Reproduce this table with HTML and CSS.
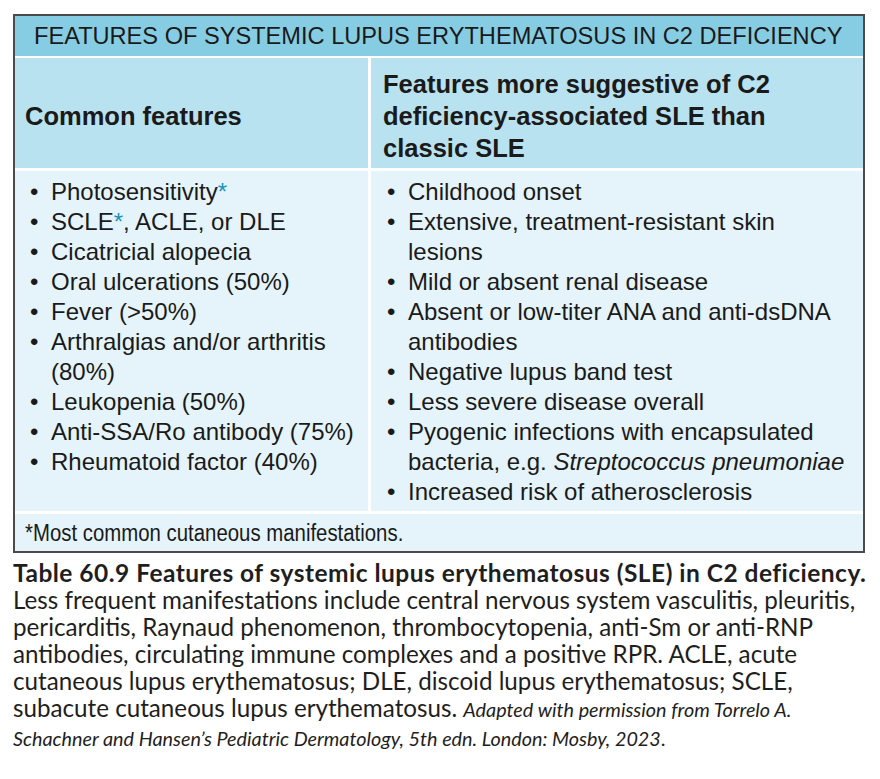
FILE: index.html
```html
<!DOCTYPE html>
<html lang="en">
<head>
<meta charset="utf-8">
<title>Table 60.9</title>
<link rel="stylesheet" href="styles.css">
</head>
<body>
<div class="page">
  <div class="tbl">
    <div class="title">FEATURES OF SYSTEMIC LUPUS ERYTHEMATOSUS IN C2 DEFICIENCY</div>
    <div class="grid">
      <div class="head head1">Common features</div>
      <div class="head head2">Features more suggestive of C2<br>deficiency-associated SLE than<br>classic SLE</div>
      <ul class="list list1">
        <li><span class="dot">•</span><span>Photosensitivity<span class="ast">*</span></span></li>
        <li><span class="dot">•</span><span>SCLE<span class="ast">*</span>, ACLE, or DLE</span></li>
        <li><span class="dot">•</span><span>Cicatricial alopecia</span></li>
        <li><span class="dot">•</span><span>Oral ulcerations (50%)</span></li>
        <li><span class="dot">•</span><span>Fever (&gt;50%)</span></li>
        <li><span class="dot">•</span><span>Arthralgias and/or arthritis<br>(80%)</span></li>
        <li><span class="dot">•</span><span>Leukopenia (50%)</span></li>
        <li><span class="dot">•</span><span>Anti-SSA/Ro antibody (75%)</span></li>
        <li><span class="dot">•</span><span>Rheumatoid factor (40%)</span></li>
      </ul>
      <ul class="list list2">
        <li><span class="dot">•</span><span>Childhood onset</span></li>
        <li><span class="dot">•</span><span>Extensive, treatment-resistant skin<br>lesions</span></li>
        <li><span class="dot">•</span><span>Mild or absent renal disease</span></li>
        <li><span class="dot">•</span><span>Absent or low-titer ANA and anti-dsDNA<br>antibodies</span></li>
        <li><span class="dot">•</span><span>Negative lupus band test</span></li>
        <li><span class="dot">•</span><span>Less severe disease overall</span></li>
        <li><span class="dot">•</span><span>Pyogenic infections with encapsulated<br>bacteria, e.g. <i>Streptococcus pneumoniae</i></span></li>
        <li><span class="dot">•</span><span>Increased risk of atherosclerosis</span></li>
      </ul>
    </div>
    <div class="foot"><span class="foot-text">*Most common cutaneous manifestations.</span></div>
  </div>
  <p class="caption"><b>Table 60.9 Features of systemic lupus erythematosus (SLE) in C2 deficiency.</b><br>Less frequent manifestations include central nervous system vasculitis, pleuritis,<br>pericarditis, Raynaud phenomenon, thrombocytopenia, anti-Sm or anti-RNP<br>antibodies, circulating immune complexes and a positive RPR. ACLE, acute<br>cutaneous lupus erythematosus; DLE, discoid lupus erythematosus; SCLE,<br>subacute cutaneous lupus erythematosus. <i class="src">Adapted with permission from Torrelo A.</i><br><i class="src">Schachner and Hansen’s Pediatric Dermatology, 5th edn. London: Mosby, 2023</i><span class="src">.</span></p>
</div>
</body>
</html>
```
FILE: styles.css
```css
html, body {
  margin: 0;
  padding: 0;
  background: #ffffff;
}

.page {
  padding: 14px 0 0 13px;
  width: 867px;
}

.tbl {
  box-sizing: border-box;
  width: 852px;
  border: 2px solid #4b4b4b;
  background: #ffffff;
  font-family: "Liberation Sans", Arial, sans-serif;
  color: #1a1a1a;
}

.title {
  height: 40px;
  line-height: 41px;
  background: #86cde3;
  padding-left: 19px;
  font-size: 23.6px;
  white-space: nowrap;
}

.grid {
  margin-top: 2px;
  display: grid;
  grid-template-columns: 353px 1fr;
  column-gap: 3px;
  row-gap: 3px;
}

.head {
  background: #b9e2f0;
  font-weight: bold;
  font-size: 25.5px;
  line-height: 32px;
  height: 110px;
  box-sizing: border-box;
}

.head1 {
  display: flex;
  align-items: center;
  padding: 6px 0 0 10px;
}

.head2 {
  padding: 10px 0 0 12px;
  white-space: nowrap;
}

.list {
  list-style: none;
  margin: 0;
  background: #e5f3fa;
  font-size: 24px;
  line-height: 30px;
  padding: 6px 0 4px 0;
  white-space: nowrap;
}

.list1 {
  padding-left: 15px;
}

.list2 {
  padding-left: 16px;
}

.list li {
  display: flex;
}

.dot {
  flex: 0 0 21px;
  width: 21px;
}

.ast {
  color: #1b93b8;
}

.foot {
  margin-top: 3px;
  background: #e5f3fa;
  height: 37px;
  line-height: 38px;
  padding-left: 10px;
  font-size: 23px;
  white-space: nowrap;
}

.foot-text {
  display: inline-block;
  transform: scaleX(0.886);
  transform-origin: left center;
}

.caption {
  margin: 6px 0 0 0;
  font-family: Lato, "Noto Sans", sans-serif;
  font-size: 24.2px;
  line-height: 27px;
  color: #1e1e1e;
  white-space: nowrap;
}

.caption b {
  font-size: 24.5px;
  letter-spacing: 0.48px;
  font-weight: bold;
}

.src {
  font-size: 19.8px;
}
```
